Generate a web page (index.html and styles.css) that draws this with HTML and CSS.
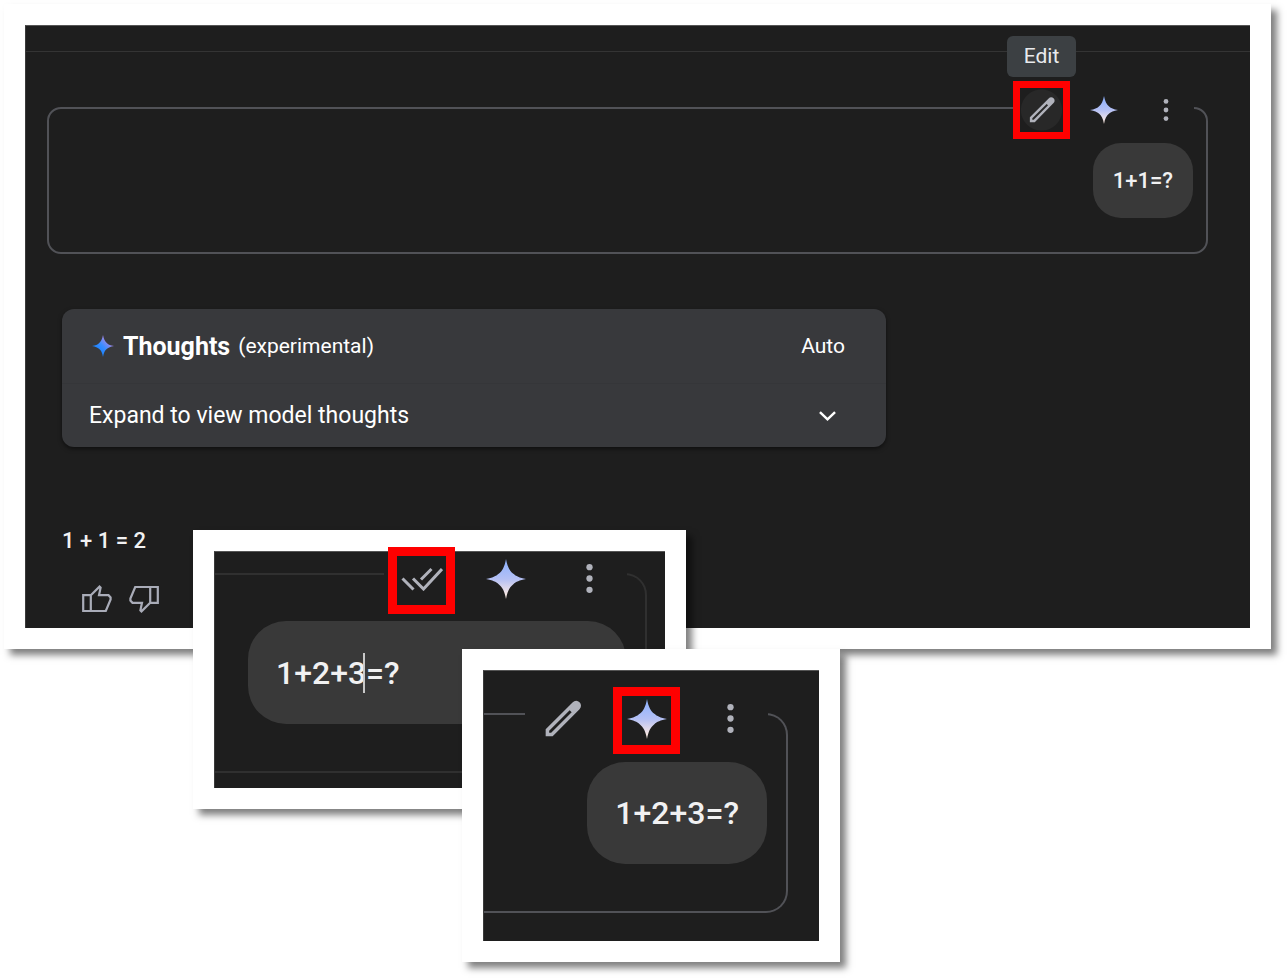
FILE: index.html
```html
<!DOCTYPE html>
<html lang="en">
<head>
<meta charset="utf-8">
<title>Edit and rerun a prompt</title>
<link rel="stylesheet" href="styles.css">
</head>
<body>
<svg class="defs" aria-hidden="true">
  <defs>
    <linearGradient id="pale" x1="0" y1="0" x2="0" y2="1">
      <stop offset="0" stop-color="#8ab0ff"/>
      <stop offset=".5" stop-color="#b4c0f4"/>
      <stop offset=".85" stop-color="#f2e4e6"/>
      <stop offset="1" stop-color="#fff0e4"/>
    </linearGradient>
    <linearGradient id="blue" x1=".3" y1=".8" x2=".8" y2=".3">
      <stop offset="0" stop-color="#1583ff"/>
      <stop offset=".5" stop-color="#3b8cff"/>
      <stop offset="1" stop-color="#a889e6"/>
    </linearGradient>
    <symbol id="pencil" viewBox="0 0 24 24">
      <path fill="currentColor" fill-rule="evenodd" d="M1.600 22.400V18.200L17.700 2.100q1-1 2.200-1t2 .9q.9.900.9 2t-.9 2.100L5.800 22.400zM3.700 20.300H4.900L17.200 8 16 6.800 3.700 19.100z"/>
    </symbol>
    <symbol id="star" viewBox="0 0 24 24">
      <path d="M12 0C12.800 4.600 14.200 7.200 16.400 8.900 18 10.300 20 11.300 24 12 20 12.700 18 13.700 16.400 15.100 14.200 16.800 12.800 19.400 12 24 11.200 19.400 9.800 16.800 7.600 15.100 6 13.700 4 12.700 0 12 4 11.300 6 10.300 7.600 8.900 9.800 7.200 11.200 4.600 12 0z"/>
    </symbol>
    <symbol id="dots" viewBox="0 0 24 24">
      <g fill="currentColor"><circle cx="12" cy="2.600" r="2.600"/><circle cx="12" cy="12" r="2.600"/><circle cx="12" cy="21.400" r="2.600"/></g>
    </symbol>
    <symbol id="checks" viewBox="0 0 42 24">
      <path fill="none" stroke="currentColor" stroke-width="3" d="M1.500 11.500l11 11M12 11.500l10.500 10.500L41 2M20 12.500L30.500 2"/>
    </symbol>
    <symbol id="thumb" viewBox="0 0 30 28">
      <path fill="none" stroke="currentColor" stroke-width="2.200" d="M1.200 10.200H8.800V26H1.200zM8.800 10.200L17.500 1.600 18.600 2.700 17 10.200H26.500L28.600 12.500V14.500L23.800 26H8.800"/>
    </symbol>
  </defs>
</svg>

<main class="collage">
  <section class="frame frame-main">
    <div class="panel">
      <div class="topbar"></div>
      <div class="turn">
        <div class="tools">
          <button class="tool marked hovered" aria-label="Edit" aria-describedby="tip"><svg class="icon"><use href="#pencil"/></svg></button>
          <button class="tool" aria-label="Rerun"><svg class="icon"><use href="#star" fill="url(#pale)"/></svg></button>
          <button class="tool" aria-label="More options"><svg class="icon small"><use href="#dots"/></svg></button>
          <span class="tooltip" id="tip" role="tooltip">Edit</span>
        </div>
        <p class="bubble">1+1=?</p>
      </div>

      <div class="thoughts">
        <div class="thoughts-head">
          <svg class="logo"><use href="#star" fill="url(#blue)"/></svg>
          <h2>Thoughts</h2>
          <span class="note">(experimental)</span>
          <span class="mode">Auto</span>
        </div>
        <button class="expand">
          Expand to view model thoughts
          <svg class="chevron" viewBox="0 0 18 10"><path fill="none" stroke="#fff" stroke-width="2.600" d="M1 1l8 7.500L17 1"/></svg>
        </button>
      </div>

      <p class="answer">1 + 1 = 2</p>
      <div class="votes">
        <button class="vote" aria-label="Good response"><svg class="thumb"><use href="#thumb"/></svg></button>
        <button class="vote" aria-label="Bad response"><svg class="thumb down"><use href="#thumb"/></svg></button>
      </div>
    </div>
  </section>

  <section class="frame inset frame-edit">
    <div class="panel">
      <div class="turn dim">
        <div class="tools">
          <button class="tool marked" aria-label="Done editing"><svg class="icon wide"><use href="#checks"/></svg></button>
          <button class="tool" aria-label="Rerun"><svg class="icon"><use href="#star" fill="url(#pale)"/></svg></button>
          <button class="tool" aria-label="More options"><svg class="icon small"><use href="#dots"/></svg></button>
        </div>
        <div class="editor">
          <input class="bubble" type="text" value="1+2+3=?" aria-label="Prompt">
          <span class="caret"></span>
        </div>
      </div>
    </div>
  </section>

  <section class="frame inset frame-rerun">
    <div class="panel">
      <div class="turn">
        <div class="tools">
          <button class="tool" aria-label="Edit"><svg class="icon"><use href="#pencil"/></svg></button>
          <button class="tool marked" aria-label="Rerun"><svg class="icon"><use href="#star" fill="url(#pale)"/></svg></button>
          <button class="tool" aria-label="More options"><svg class="icon small"><use href="#dots"/></svg></button>
        </div>
        <p class="bubble">1+2+3=?</p>
      </div>
    </div>
  </section>
</main>
</body>
</html>
```
FILE: styles.css
```css
* { box-sizing: border-box; }

body {
  margin: 0;
  background: #fff;
  color: #f1f1f2;
  font-family: Roboto, "Liberation Sans", sans-serif;
}

h2, p { margin: 0; }

button, input {
  border: 0;
  padding: 0;
  background: none;
  color: inherit;
  font: inherit;
}

.defs {
  position: absolute;
  width: 0;
  height: 0;
}

.collage {
  position: relative;
  min-height: 100vh;
  padding: 4px 16px 0 4px;
}

.frame {
  padding: 21px;
  background: #fff;
  box-shadow: 6px 6px 7px rgba(0, 0, 0, .5);
}

.panel {
  border-top: 1px solid #555;
  border-left: 1px solid #3a3a3a;
  background: #1e1e1e;
}

/* Conversation turn with its toolbar sitting on the outline */
.turn {
  position: relative;
  display: flex;
  justify-content: flex-end;
  border: 2px solid #515257;
  border-radius: 14px;
}

/* The background strip only breaks the outline behind the buttons */
.tools {
  position: absolute;
  display: flex;
  background: linear-gradient(#1e1e1e, #1e1e1e) center / 100% 20px no-repeat;
  color: #b0b2bb;
}

.tool {
  display: grid;
  place-items: center;
}

.marked {
  border: solid #f00;
  background: #1e1e1e;
}

.icon { display: block; }

.bubble {
  background: #393939;
  font-weight: 500;
}

/* Main frame */
.frame-main .panel { padding-bottom: 9px; }

.topbar {
  height: 26px;
  border-bottom: 1px solid #343434;
}

.frame-main .turn {
  margin: 55px 42px 0 21px;
  padding: 34px 13px;
}

.frame-main .tools {
  top: -28px;
  right: 12px;
  gap: 5px;
}

.frame-main .tool {
  width: 57px;
  height: 58px;
}

.frame-main .marked { border-width: 7px; }

.hovered { background: radial-gradient(circle, #282828 20px, #1e1e1e 21px); }

.frame-main .icon {
  width: 28px;
  height: 28px;
}

.frame-main .small {
  width: 22px;
  height: 22px;
}

.tooltip {
  position: absolute;
  bottom: 62px;
  left: -6px;
  width: 69px;
  border-radius: 6px;
  background: #3c4043;
  color: #e8eaed;
  font-size: 21px;
  line-height: 41px;
  text-align: center;
}

.frame-main .bubble {
  padding: 0 20px;
  border-radius: 28px;
  font-size: 22px;
  line-height: 75px;
}

.thoughts {
  max-width: 824px;
  margin: 55px 42px 0 36px;
  border-radius: 12px;
  background: #38393c;
  box-shadow: 0 2px 4px rgba(0, 0, 0, .5);
  color: #fff;
}

.thoughts-head {
  display: flex;
  align-items: center;
  height: 75px;
  padding: 0 41px 0 30px;
  border-bottom: 1px solid #353639;
}

.logo {
  width: 22px;
  height: 22px;
  margin-right: 9px;
}

.thoughts h2 {
  margin-right: 8px;
  font-size: 25px;
  font-weight: 700;
}

.note, .mode { font-size: 21px; }

.mode { margin-left: auto; }

.expand {
  display: flex;
  align-items: center;
  justify-content: space-between;
  width: 100%;
  height: 63px;
  padding: 0 50px 0 27px;
  font-size: 23px;
}

.chevron {
  width: 17px;
  height: 10px;
}

.answer {
  margin: 78px 36px 0;
  font-size: 22px;
  font-weight: 500;
  line-height: 32px;
}

.votes {
  display: flex;
  margin: 22px 47px 0;
}

.vote {
  display: grid;
  place-items: center;
  width: 47px;
  height: 40px;
  color: #a9acb8;
}

.thumb {
  width: 30px;
  height: 28px;
}

.down { transform: rotate(180deg); }

/* Enlarged details laid over the main frame */
.inset { position: absolute; }

.inset .turn {
  border-left: 0;
  border-radius: 0 22px 22px 0;
}

.inset .tools {
  top: -28px;
  right: 18px;
  gap: 17px;
  padding: 0 4px;
}

.inset .tool {
  width: 67px;
  height: 67px;
  padding-bottom: 4px;
}

.inset .marked { border-width: 9px; }

.inset .icon {
  width: 40px;
  height: 40px;
}

.inset .wide {
  width: 42px;
  height: 24px;
}

.inset .small {
  width: 29px;
  height: 29px;
}

.inset .bubble {
  padding: 0 28px;
  border-radius: 38px;
  font-size: 32px;
  line-height: 102px;
}

.frame-edit {
  top: 530px;
  left: 193px;
  width: 493px;
}

.frame-edit .panel { padding: 21px 18px 15px 0; }

.inset .dim {
  border-color: #303030;
  padding: 46px 19px 47px 33px;
}

.editor {
  position: relative;
  width: 100%;
}

.editor .bubble {
  display: block;
  width: 100%;
  height: 103px;
}

.caret {
  position: absolute;
  top: 32px;
  left: 115px;
  width: 2px;
  height: 40px;
  background: #c8c8c8;
}

.frame-rerun {
  top: 649px;
  left: 462px;
  width: 378px;
}

.frame-rerun .panel { padding: 42px 31px 28px 0; }

.frame-rerun .turn { padding: 47px 19px; }
```
